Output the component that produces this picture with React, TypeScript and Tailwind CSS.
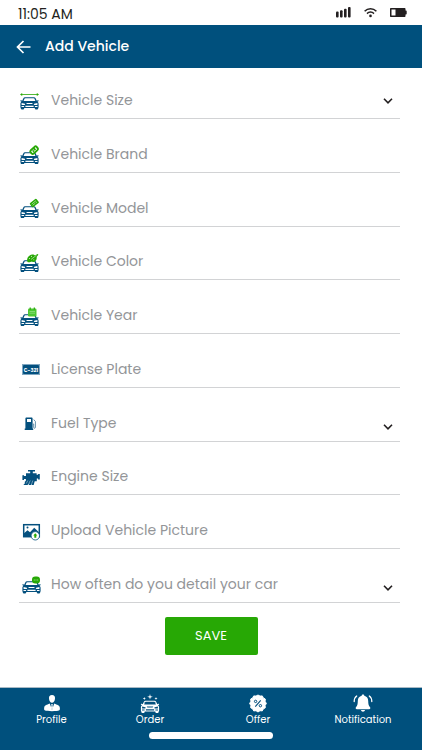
import type { ReactNode } from 'react';
import { clsx } from 'clsx';

const BLUE = '#04507e';
const GREEN = '#27a805';

function CarBody({ y, x = 0, color = BLUE, glass = '#ffffff' }: { y: number; x?: number; color?: string; glass?: string }) {
  return (
    <g transform={`translate(${x} ${y})`}>
      <path
        fill={color}
        d="M5 0.2h9c.8 0 1.3.3 1.6 1l1.2 2.6 1-.5c.7-.2 1.2.6.6 1l-.9.5c.8.6 1.1 1.3 1.1 2.2v3.2c0 .3-.2.5-.4.6v.8c0 .5-.3.8-.8.8h-1.8c-.5 0-.8-.3-.8-.8v-.6H4.2v.6c0 .5-.3.8-.8.8H1.6c-.5 0-.8-.3-.8-.8v-.8c-.2-.1-.4-.3-.4-.6V7c0-.9.3-1.6 1.1-2.2l-.9-.5c-.6-.4-.1-1.2.6-1l1 .5 1.2-2.6c.3-.7.8-1 1.6-1z"
      />
      <path fill={glass} d="M5.3 1.3h8.4c.4 0 .6.2.8.5l.9 2.3H3.6l.9-2.3c.2-.3.4-.5.8-.5z" />
      <path fill={glass} d="M1.6 6l3.200.7c.5.200.4 1.200-.2 1.200H1.600zM17.400 6l-3.200.7c-.5.200-.4 1.200.2 1.200h3z" />
      <path fill={glass} d="M6.200 5.900h6.600l-.7 1.100H6.900zM5.400 8.700h8.200v1.300H5.400zM1.500 9h2.600v.9H1.500zM14.900 9h2.600v.9h-2.600z" />
    </g>
  );
}

function FieldIcon({ children }: { children: ReactNode }) {
  return (
    <svg viewBox="0 0 22 20" className="h-5 w-[22px] shrink-0" aria-hidden="true">
      {children}
    </svg>
  );
}

const sizeIcon = (
  <FieldIcon>
    <path d="M2 3.500h17" stroke={GREEN} strokeWidth="0.8" />
    <path d="M1 3.500l2.200-1.500v3zM20 3.500l-2.200-1.500v3z" fill={GREEN} />
    <CarBody x={1} y={6} />
  </FieldIcon>
);

const brandIcon = (
  <FieldIcon>
    <CarBody x={1} y={8} />
    <g transform="rotate(-42 15 6)" fill="none" stroke={GREEN} strokeWidth="1.900">
      <rect x="11" y="4" width="8" height="4.400" rx="1.500" fill="#ffffff" />
      <path d="M13 6.300h1.500M16 4v3" />
    </g>
  </FieldIcon>
);

const modelIcon = (
  <FieldIcon>
    <CarBody x={1} y={8} />
    <g transform="rotate(-38 15 5)">
      <rect x="11" y="2.600" width="8.500" height="5.200" rx="1" fill={GREEN} />
      <path d="M12.500 4.400h5.500M12.500 6h3M16.300 6h1.700" stroke="#d4f3cb" strokeWidth="0.600" />
    </g>
  </FieldIcon>
);

const colorIcon = (
  <FieldIcon>
    <CarBody x={1} y={8} />
    <path d="M8.300 9.500c-.8-3 1.300-6.500 4.700-7 1.800-.3 2.600.8 3.300.7l2.300-1.200.8.800-1.700 2c.3 1.800-.3 4.200-2.700 5.200-1.200.4-1.900-.7-3.100-.3-1.200.5-2.800 1.300-3.600-.2z" fill={GREEN} />
    <path d="M12 7.500l5.500-4.300" stroke="#ffffff" strokeWidth="0.500" />
    <g fill="#c6efbc">
      <circle cx="10.500" cy="6.500" r=".6" />
      <circle cx="12.500" cy="4.300" r=".6" />
      <circle cx="14.800" cy="7.800" r=".5" />
    </g>
  </FieldIcon>
);

const yearIcon = (
  <FieldIcon>
    <CarBody x={1} y={8} />
    <rect x="9" y="2.600" width="8.500" height="7.900" rx="1.200" fill="#4cc733" />
    <path d="M11.200 1.500v2.300M15.300 1.500v2.300" stroke={GREEN} strokeWidth="1.200" />
    <path d="M10.500 5.500h5.500M10.500 7.200h5.500" stroke="#9be48b" strokeWidth="0.700" />
  </FieldIcon>
);

const plateIcon = (
  <FieldIcon>
    <rect x="3" y="5" width="18" height="11" fill="#7fa6c0" />
    <rect x="4" y="6" width="16" height="9" rx="1" fill={BLUE} />
    <text x="12" y="12.500" textAnchor="middle" fontSize="5" fontWeight="700" fill="#ffffff">
      C-321
    </text>
  </FieldIcon>
);

const fuelIcon = (
  <FieldIcon>
    <path fill={BLUE} fillRule="evenodd" d="M7.500 4.500h5c.7 0 1.100.4 1.100 1.100V15.500h.6V17H5.700v-1.500h.7V5.600c0-.7.400-1.100 1.100-1.100zM8 6v3h4V6z" />
    <path d="M14 11h.7v3.300c0 1.300 1.700 1.300 1.700 0V8.500l-1.700-2" fill="none" stroke="#5584a3" strokeWidth="0.900" />
  </FieldIcon>
);

const engineIcon = (
  <FieldIcon>
    <path
      fill={BLUE}
      d="M9 3h7v1.600h-2.200v1.600h3.800v1.600h1.500V7h1.700v5.500h-1.700v-1h-1.300v2.700h-2.100l-1 3.800H12.500l.8-2.300-1.500 2.300H9.600l1.100-2.300-2.200 2.300H4.300l1.500-1.600v-1.700l1.100-.900v-1.700H5v.9H3.400V8.200H5V9h2V6.200h4.200V4.600H9z"
    />
    <path d="M8.800 13.500l-1.500 3M11.300 13.500l-1.500 3M13.800 13.500l-1 3" stroke="#9dbbcf" strokeWidth="0.700" />
  </FieldIcon>
);

const pictureIcon = (
  <FieldIcon>
    <rect x="4.700" y="3.700" width="15.600" height="12" fill="#ffffff" stroke={BLUE} strokeWidth="1.500" />
    <path d="M5 14.500v-2.300l3.500-3 2.500 2 4.200-4.400 4.800 4.400v3.800H5z" fill={BLUE} />
    <circle cx="8.500" cy="6.600" r="1" fill={BLUE} />
    <circle cx="16.300" cy="14.800" r="4.200" fill="#ffffff" stroke={BLUE} strokeWidth="0.800" />
    <path d="M16.300 12.200l2 2.300h-1v2.300h-2v-2.300h-1z" fill={GREEN} />
  </FieldIcon>
);

const detailIcon = (
  <FieldIcon>
    <CarBody x={3} y={7} />
    <rect x="13" y="2.500" width="8" height="7" rx="3.200" fill={GREEN} />
    <path d="M14.800 6h4.400" stroke="#9be08b" strokeWidth="1" strokeDasharray="1 .7" />
  </FieldIcon>
);

type Field = { id: string; label: string; icon: ReactNode; select?: boolean; low?: boolean };

const fields: Field[] = [
  { id: 'size', label: 'Vehicle Size', icon: sizeIcon, select: true },
  { id: 'brand', label: 'Vehicle Brand', icon: brandIcon },
  { id: 'model', label: 'Vehicle Model', icon: modelIcon },
  { id: 'color', label: 'Vehicle Color', icon: colorIcon },
  { id: 'year', label: 'Vehicle Year', icon: yearIcon },
  { id: 'plate', label: 'License Plate', icon: plateIcon },
  { id: 'fuel', label: 'Fuel Type', icon: fuelIcon, select: true, low: true },
  { id: 'engine', label: 'Engine Size', icon: engineIcon },
  { id: 'picture', label: 'Upload Vehicle Picture', icon: pictureIcon },
  { id: 'frequency', label: 'How often do you detail your car', icon: detailIcon, select: true, low: true },
];

const controlClass =
  'h-full w-full min-w-0 flex-1 appearance-none bg-transparent text-[14px] text-[#939598] outline-none placeholder:text-[#939598]';

function FieldRow({ field }: { field: Field }) {
  return (
    <div className="flex h-9 items-center gap-[10px] border-b border-[#d2d3d5]">
      <label htmlFor={field.id} aria-label={field.label}>
        {field.icon}
      </label>
      {field.select ? (
        <>
          <select id={field.id} defaultValue="" className={controlClass}>
            <option value="">{field.label}</option>
          </select>
          <svg
            viewBox="0 0 10 10"
            className={clsx('pointer-events-none mr-[7px] size-[10px] shrink-0', field.low && 'mt-2')}
            aria-hidden="true"
          >
            <path d="M1 2.800l4 4 4-4" fill="none" stroke="#231f20" strokeWidth="1.600" />
          </svg>
        </>
      ) : (
        <input id={field.id} type="text" placeholder={field.label} className={controlClass} />
      )}
    </div>
  );
}

function StatusBar() {
  return (
    <div className="flex h-[25px] items-center justify-between pt-[3px] pr-[15px] pl-[18px] text-[#231f20]">
      <span className="text-[14px]">11:05 AM</span>
      <div className="flex items-center gap-[13px] pb-1">
        <svg viewBox="0 0 15 11" className="h-[11px] w-[15px]" fill="currentColor" aria-hidden="true">
          <rect x="0" y="4.500" width="2.600" height="6" rx="1" />
          <rect x="4" y="3.300" width="2.600" height="7.200" rx="1" />
          <rect x="8" y="1.800" width="2.600" height="8.700" rx="1" />
          <rect x="12" y="0" width="2.600" height="10.500" rx="1" />
        </svg>
        <svg viewBox="0 0 13 11" className="h-[11px] w-[13px]" fill="none" stroke="currentColor" strokeWidth="1.500" aria-hidden="true">
          <path d="M.6 4.200c3.300-3.400 8.500-3.400 11.800 0M3 6.600c2-2 5-2 7 0" />
          <circle cx="6.500" cy="8.900" r="1.300" fill="currentColor" stroke="none" />
        </svg>
        <svg viewBox="0 0 17 9" className="h-[9px] w-[17px]" fill="currentColor" aria-hidden="true">
          <path fillRule="evenodd" d="M1 0h13.500c.6 0 1 .4 1 1v1.500h.5c.5 0 .7.300.7.700v2.600c0 .4-.2.700-.7.700h-.5V8c0 .6-.4 1-1 1H1c-.6 0-1-.4-1-1V1c0-.6.4-1 1-1zM1.500 1.500v6h4v-6z" />
        </svg>
      </div>
    </div>
  );
}

const tabs = [
  {
    label: 'Profile',
    icon: (
      <>
        <path d="M10 1c2.200 0 3.200 1.500 3 3.500-.1 2.400-1.400 4.300-3 4.300S7.100 6.900 7 4.500C6.800 2.500 7.800 1 10 1z" />
        <path d="M7.800 9.400L10 16l2.200-6.600c1 .8 5.300 1.300 5.600 4 .2 1.300.1 2.400-.5 2.900-2.300 1.200-12.300 1.200-14.600 0-.6-.5-.7-1.600-.5-2.900.3-2.700 4.600-3.200 5.600-4z" />
        <path d="M9.200 10h1.600l-.3 1.300.5 2.700-1 2-1-2 .5-2.700z" />
      </>
    ),
  },
  {
    label: 'Order',
    icon: (
      <>
        <CarBody x={0.5} y={6.5} color="#ffffff" glass={BLUE} />
        <path d="M10 0l.6 2.200 2.200.6-2.200.6L10 5.600l-.6-2.200-2.200-.6 2.200-.6zM4.300 3l.4 1.100 1.100.4-1.100.4L4.300 6l-.4-1.100-1.100-.4 1.100-.4zM16 3l.4 1.100 1.100.4-1.100.4L16 6l-.4-1.100-1.100-.4 1.100-.4z" />
      </>
    ),
  },
  {
    label: 'Offer',
    icon: (
      <>
        <path d="M10 1l2 1.100 2.300-.2 1 2 2 1.100-.2 2.300L18.400 9.500l-1.300 2 .2 2.300-2 1.100-1 2-2.300-.2-2 1.300-2-1.300-2.300.2-1-2-2-1.100.2-2.300-1.300-2 1.300-2.200-.2-2.300 2-1.100 1-2 2.300.2z" stroke="#ffffff" strokeLinejoin="round" />
        <path d="M12.700 6.300l-5.400 6.400" stroke={BLUE} strokeWidth="1.100" />
        <g fill="none" stroke={BLUE} strokeWidth="1">
          <circle cx="7.600" cy="7.400" r="1.200" />
          <circle cx="12.400" cy="11.700" r="1.200" />
        </g>
      </>
    ),
  },
  {
    label: 'Notification',
    icon: (
      <>
        <path d="M10 .5c.8 0 1.300.5 1.300 1.300 2.500.6 3.900 2.500 3.900 5.200 0 3.200.5 4.800 1.700 6 .9 1 .4 2.200-.8 2.200H3.900c-1.200 0-1.700-1.200-.8-2.200C4.300 11.800 4.800 10.200 4.800 7c0-2.700 1.400-4.600 3.900-5.200C8.700 1 9.200.5 10 .5zM8 16h4c-.3 2.300-3.700 2.300-4 0z" />
        <path d="M3.700 2C2 3.200 1.200 5 1.200 7.500M16.300 2c1.700 1.200 2.500 3 2.500 5.500" fill="none" stroke="#ffffff" strokeWidth="1.300" strokeLinecap="round" />
      </>
    ),
  },
];

function TabBar() {
  return (
    <footer className="border-t border-[#a9bac5] bg-[#00507d] pb-[11px]">
      <nav className="grid grid-cols-[103fr_94fr_122fr_88fr] pt-[6px] pr-[15px]">
        {tabs.map((tab) => (
          <a key={tab.label} href="#" className="flex flex-col items-center text-[10px] leading-[14px] text-white">
            <svg viewBox="0 0 20 19" className="h-[19px] w-5" fill="#ffffff" aria-hidden="true">
              {tab.icon}
            </svg>
            {tab.label}
          </a>
        ))}
      </nav>
      <div className="mx-auto mt-[5px] h-[7px] w-[124px] rounded-full bg-white" />
    </footer>
  );
}

export default function App() {
  return (
    <div className="flex min-h-screen flex-col bg-white font-['Poppins','Inter',sans-serif]">
      <StatusBar />
      <header className="flex h-[43px] items-center gap-[14px] bg-[#00507d] px-4 text-white">
        <button type="button" aria-label="Back">
          <svg viewBox="0 0 15 14" className="h-[14px] w-[15px]" fill="none" stroke="currentColor" strokeWidth="1.700" aria-hidden="true">
            <path d="M14.500 7H1.500M7.500 1L1.500 7l6 6" />
          </svg>
        </button>
        <h1 className="text-[14px] font-medium">Add Vehicle</h1>
      </header>
      <form className="flex flex-1 flex-col pt-[15px] pb-8">
        <div className="flex flex-1 flex-col justify-between pr-[22px] pl-[19px]">
          {fields.map((field) => (
            <FieldRow key={field.id} field={field} />
          ))}
        </div>
        <button type="button" className="mx-auto mt-[14px] h-[38px] w-[93px] rounded-xs bg-[#27a805] text-[13px] text-white">
          SAVE
        </button>
      </form>
      <TabBar />
    </div>
  );
}
